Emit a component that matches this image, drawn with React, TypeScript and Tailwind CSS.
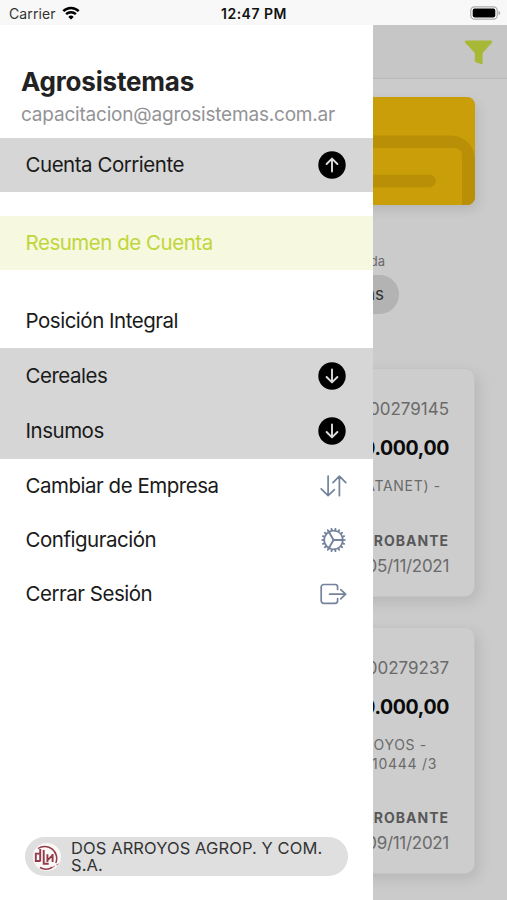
import type { ReactNode } from "react";
import { IoCogOutline } from "react-icons/io5";

function CircleArrow({ up = false }: { up?: boolean }) {
  return (
    <svg className={up ? "size-7" : "size-7 rotate-180"} viewBox="0 0 28 28" fill="none">
      <circle cx="14" cy="14" r="13.7" fill="#000" />
      <path d="M8.6 13 14 7.6 19.4 13M14 8v12.5" stroke="#dedede" strokeWidth="1.9" strokeLinecap="round" strokeLinejoin="round" />
    </svg>
  );
}

function SwapIcon() {
  return (
    <svg className="h-[22px] w-[27px]" viewBox="0 0 27 22" fill="none" stroke="#74839b" strokeWidth="1.7" strokeLinecap="round" strokeLinejoin="round">
      <path d="M8.1 1v19.3M1.2 13.8l6.9 6.8 6.3-6M19.4 20.7V1.4M13 7.6l6.4-6.4 6.4 6.4" />
    </svg>
  );
}

function LogOutIcon() {
  return (
    <svg className="h-[22px] w-[27px]" viewBox="0 0 27 22" fill="none" stroke="#74839b" strokeWidth="1.7" strokeLinecap="round" strokeLinejoin="round">
      <path d="M17.6 15.5v2.3a2.5 2.5 0 0 1-2.5 2.5H3.7a2.5 2.5 0 0 1-2.5-2.5V4a2.5 2.5 0 0 1 2.5-2.5h11.4A2.5 2.5 0 0 1 17.6 4v2.5M9.6 11.2h16M20.7 6.6l5 4.6-5 4.6" />
    </svg>
  );
}

function Row({ label, className, icon }: { label: string; className: string; icon?: ReactNode }) {
  return (
    <div className={`flex shrink-0 items-center justify-between pl-[25.5px] text-[20.5px] tracking-[-0.48px] ${className}`}>
      <span>{label}</span>
      {icon}
    </div>
  );
}

function StatusBar() {
  return (
    <div className="grid h-[25px] shrink-0 grid-cols-3 items-center bg-[#f8f8f8] pl-[9px] pr-[6px] pt-[3px] text-[14px] leading-none">
      <div className="flex items-center gap-[6px] text-[#333]">
        <span className="tracking-[0.1px]">Carrier</span>
        <svg className="-mt-[3px] h-[14px] w-[18px]" viewBox="0 0 18 14">
          <path d="M1.3 5.2a11 11 0 0 1 15.4 0" fill="none" stroke="#000" strokeWidth="2.5" />
          <path d="M4.1 8.2a7 7 0 0 1 9.8 0" fill="none" stroke="#000" strokeWidth="2.4" />
          <path d="M9 13.6 6.3 10.9a3.8 3.8 0 0 1 5.4 0Z" fill="#000" />
        </svg>
      </div>
      <div className="pr-[2px] text-center font-semibold tracking-[0.5px] text-[#111]">12:47 PM</div>
      <div className="flex justify-end pb-[3px]">
        <svg className="h-[14px] w-[31px]" viewBox="0 0 31 14">
          <rect x=".8" y=".8" width="26.4" height="12.4" rx="3.6" fill="#fff" stroke="#aaa" strokeWidth="1.2" />
          <rect x="2.7" y="2.6" width="22.6" height="8.8" rx="1.8" fill="#000" />
          <path d="M28.5 4.8v4.4q1.8-.7 1.8-2.2t-1.8-2.2Z" fill="#aaa" />
        </svg>
      </div>
    </div>
  );
}

function Drawer() {
  return (
    <nav className="flex w-[372.5px] shrink-0 flex-col bg-white text-[#1a1a1a]">
      <header className="h-[112.5px] shrink-0 pl-[21px] pt-[41px]">
        <h1 className="text-[26px] font-bold leading-8 tracking-[-0.2px] text-[#222]">Agrosistemas</h1>
        <p className="mt-[5px] text-[19px] leading-6 tracking-[-0.2px] text-[#939396]">capacitacion@agrosistemas.com.ar</p>
      </header>
      <Row label="Cuenta Corriente" className="h-[54px] bg-[#d6d6d6] pr-[27px] pt-px [&>svg]:-mt-px" icon={<CircleArrow up />} />
      <Row label="Resumen de Cuenta" className="mt-[24.5px] h-[54px] bg-[#f7f8e0] text-[#bfd63a]" />
      <Row label="Posición Integral" className="mt-6 h-[54px]" />
      <Row label="Cereales" className="h-[55px] bg-[#d6d6d6] pr-[27px] pt-[2px] [&>svg]:-mt-[2px]" icon={<CircleArrow />} />
      <Row label="Insumos" className="h-[56px] bg-[#d6d6d6] pr-[27px] pt-px [&>svg]:-mt-[2px]" icon={<CircleArrow />} />
      <Row label="Cambiar de Empresa" className="h-[54px] pr-[26px]" icon={<SwapIcon />} />
      <Row label="Configuración" className="h-[54px] pr-[24px]" icon={<IoCogOutline className="size-[31px] pb-px text-[#74839b]" />} />
      <Row label="Cerrar Sesión" className="h-[54px] pr-[26px]" icon={<LogOutIcon />} />
      <div className="mb-[24px] ml-[25px] mt-auto flex h-[39px] w-[323px] shrink-0 items-center rounded-full bg-[#dfdfdf] pl-[8px]">
        <svg className="size-[28px] shrink-0" viewBox="0 0 28 28" fill="none">
          <circle cx="14" cy="14" r="14" fill="#faf7f7" />
          <path d="M5 5.5A12 12 0 0 1 22.8 20M7 24.5a12 12 0 0 0 12.5-.4" stroke="#933b48" strokeWidth="1.5" />
          <path d="M7.2 6v12.4M7.2 10.6H2.8v7.4h4.4M10.7 7v13.8h5M14.4 19v-7.8M14.4 17.4l5.2-5.2M19.6 11v8" stroke="#933b48" strokeWidth="1.9" />
          <path d="m18.8 25 3-2M23.3 22.2l2.2-1.4" stroke="#b46a74" strokeWidth="1" />
        </svg>
        <div className="ml-[10px] text-[16.5px] leading-[17px] tracking-[0.1px] text-[#333]">
          <p>DOS ARROYOS AGROP. Y COM.</p>
          <p>S.A.</p>
        </div>
      </div>
    </nav>
  );
}

function Voucher({ number, detail, date, className }: { number: string; detail: ReactNode; date: string; className: string }) {
  return (
    <article className={`mr-[32px] flex w-[300px] shrink-0 flex-col items-end whitespace-nowrap rounded-[10px] border border-[#c4c4c4] bg-[#cdcdcd] pr-[25px] text-[#6a6a6a] shadow-[4px_5px_14px_rgba(0,0,0,0.1)] ${className}`}>
      <p className="mt-[30px] text-[17px] leading-5">{number}</p>
      <p className="mt-[17px] text-[19.5px] font-bold leading-6 tracking-[-0.35px] text-[#0a0a0a]">$ 500.000,00</p>
      <div className="mt-[17px] h-[46px] text-[14px] leading-[18.5px] tracking-[0.7px]">{detail}</div>
      <p className="mt-[8px] text-[14px] font-bold leading-5 tracking-[1px] text-[#585858]">COMPROBANTE</p>
      <p className="mt-[5px] text-[17px] leading-5 tracking-[-0.3px]">{date}</p>
    </article>
  );
}

function Content() {
  return (
    <main className="flex min-w-0 flex-1 flex-col items-end overflow-hidden bg-[#cbcbcb]">
      <div className="flex h-[54px] w-full shrink-0 justify-end border-b border-[#b8b8b8] bg-[#c6c6c6] pr-[14px] pt-[15px]">
        <svg className="h-[25px] w-[29px]" viewBox="0 0 29 25">
          <path d="M2.2.5h24.6c1.4 0 1.7 1.3 1 2.2L18.6 13v9.8c0 1.1-.8 1.4-1.8 1.1l-5-1.6c-.7-.2-1-.6-1-1.3v-8L1.2 2.7C.5 1.8.8.5 2.2.5Z" fill="#a6b836" />
        </svg>
      </div>
      <div className="mr-[32px] mt-[18px] h-[108px] w-[300px] shrink-0 overflow-hidden rounded-[8px] bg-[#ca9e09] shadow-[3px_5px_12px_rgba(0,0,0,0.1)]">
        <svg className="size-full" viewBox="0 0 300 108" fill="none">
          <path d="M0 38.5h276a24 24 0 0 1 24 24V108h-13V58a7 7 0 0 0-7-7H0Z" fill="#b98f07" />
          <path d="M0 84h254.5" stroke="#b98f07" strokeWidth="12.5" strokeLinecap="round" />
        </svg>
      </div>
      <p className="mr-[122px] mt-[48px] shrink-0 text-[13px] leading-4 text-[#6a6a6a]">Moneda</p>
      <div className="mr-[108px] mt-[6px] flex h-[39px] w-[110px] shrink-0 items-center justify-end rounded-full bg-[#b3b3b3] pr-[15px] text-[17px] text-[#303030]">Ambas</div>
      <Voucher className="mt-[54px] h-[229px]" number="000100279145" date="05/11/2021" detail={<p className="pr-[8px]">(DATANET) -</p>} />
      <Voucher className="mt-[30px] h-[247px] [&>div]:h-[64px]" number="000100279237" date="09/11/2021" detail={<><p className="pr-[22px]">DOS ARROYOS -</p><p className="pr-[12px] text-right">10444 /3</p></>} />
    </main>
  );
}

export default function App() {
  return (
    <div className="flex h-[900px] w-[507px] flex-col overflow-hidden bg-white font-['Inter',sans-serif]">
      <StatusBar />
      <div className="flex min-h-0 flex-1">
        <Drawer />
        <Content />
      </div>
    </div>
  );
}
